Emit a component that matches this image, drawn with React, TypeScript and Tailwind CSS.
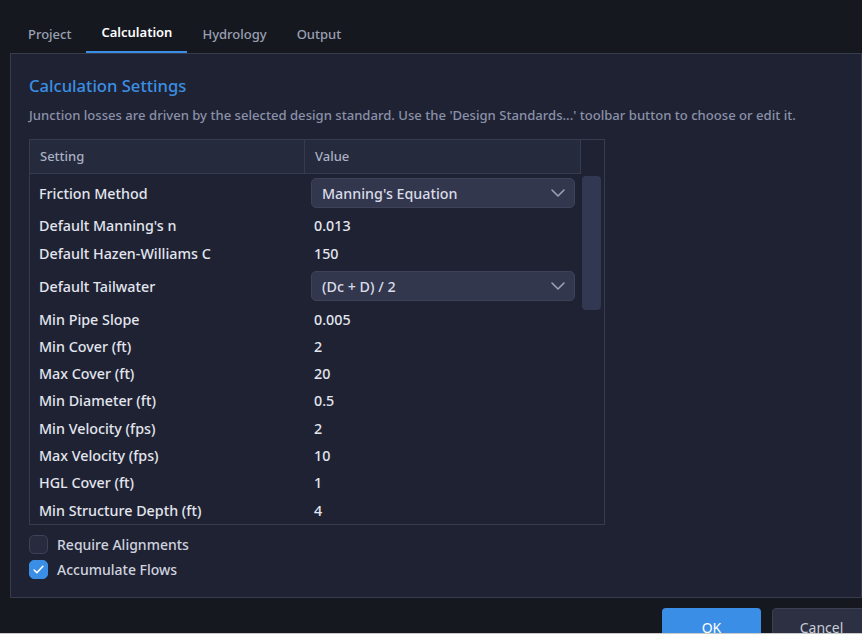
import React, { useState } from "react";

type Row = { label: string; value: string; select?: boolean };

const rows: Row[] = [
  { label: "Friction Method", value: "Manning's Equation", select: true },
  { label: "Default Manning's n", value: "0.013" },
  { label: "Default Hazen-Williams C", value: "150" },
  { label: "Default Tailwater", value: "(Dc + D) / 2", select: true },
  { label: "Min Pipe Slope", value: "0.005" },
  { label: "Min Cover (ft)", value: "2" },
  { label: "Max Cover (ft)", value: "20" },
  { label: "Min Diameter (ft)", value: "0.5" },
  { label: "Min Velocity (fps)", value: "2" },
  { label: "Max Velocity (fps)", value: "10" },
  { label: "HGL Cover (ft)", value: "1" },
  { label: "Min Structure Depth (ft)", value: "4" },
];

const tabs = ["Project", "Calculation", "Hydrology", "Output"];

function Chevron() {
  return (
    <svg width="24" height="24" viewBox="0 0 24 24" fill="none" stroke="#9aa1b8" strokeWidth="1.6" strokeLinecap="round" strokeLinejoin="round">
      <path d="m6 9 6 6 6-6" />
    </svg>
  );
}

function Checkbox({ checked, label, onToggle }: { checked: boolean; label: string; onToggle: () => void }) {
  return (
    <label className="flex items-center gap-[9px] cursor-pointer h-[19px]" onClick={onToggle}>
      <span
        className={
          checked
            ? "w-[19px] h-[19px] rounded-[5px] bg-[#3b8ee6] border border-[#3b8ee6] flex items-center justify-center"
            : "w-[19px] h-[19px] rounded-[5px] bg-[#272b3d] border border-[#3d4259]"
        }
      >
        {checked && (
          <svg width="13" height="13" viewBox="0 0 24 24" fill="none" stroke="white" strokeWidth="3" strokeLinecap="round" strokeLinejoin="round">
            <path d="M4 13l5 5L20 6" />
          </svg>
        )}
      </span>
      <span className="text-[14px] leading-[19px] font-medium text-[#cfd3df]">{label}</span>
    </label>
  );
}

export default function App() {
  const [active, setActive] = useState("Calculation");
  const [requireAlign, setRequireAlign] = useState(false);
  const [accumulate, setAccumulate] = useState(true);

  return (
    <div className="h-[634px] bg-[#c9c9c9] overflow-hidden" style={{ fontFamily: '"Noto Sans", sans-serif' }}>
      <div className="h-[633px] bg-[#161820] flex flex-col overflow-hidden">
        {/* Tabs */}
        <div className="flex h-[53px] items-end pl-[13px]">
          {tabs.map(t => (
            <button
              key={t}
              onClick={() => setActive(t)}
              className={
                t === active
                  ? "h-[53px] px-[15px] pb-[9px] flex items-end text-[13px] font-semibold text-white border-b-2 border-[#3b8ee6]"
                  : "h-[53px] px-[15px] pb-[7px] flex items-end text-[13px] font-medium text-[#9aa0b3] border-b-2 border-transparent"
              }
            >
              {t}
            </button>
          ))}
        </div>

        {/* Panel */}
        <div className="ml-[10px] h-[545px] shrink-0 border border-[#373b4f] bg-[#1f2233] px-[18px] pt-[21px]">
          <h2 className="text-[16.6px] text-[#3b8fe3] font-medium leading-[22px]">Calculation Settings</h2>
          <p className="mt-[9px] text-[13.1px] font-medium text-[#8a91a8] leading-[19px]">
            Junction losses are driven by the selected design standard. Use the 'Design Standards...' toolbar button to choose or edit it.
          </p>

          {/* Table */}
          <div className="mt-[14px] w-[576px] h-[386px] border border-[#373b4f] flex overflow-hidden">
            <div className="w-[551px] flex flex-col">
              <div className="flex h-[34px] shrink-0 bg-[#252a3c] border-b border-[#373b4f] text-[13px] font-medium text-[#aab0c3]">
                <div className="w-[275px] border-r border-[#373b4f] flex items-center pl-[10px]">Setting</div>
                <div className="flex-1 border-r border-[#373b4f] flex items-center pl-[10px]">Value</div>
              </div>
              {rows.map(r => (
                <div key={r.label} className={r.select ? "flex h-[38.5px] shrink-0 items-center" : "flex h-[27.3px] shrink-0 items-center"}>
                  <div className="w-[275px] pl-[9px] text-[14.3px] font-medium text-[#e3e6ee]">{r.label}</div>
                  {r.select ? (
                    <div className="ml-[6px] w-[264px] h-[30px] rounded-[5px] bg-[#33374d] border border-[#3d4259] flex items-center justify-between pl-[10px] pr-[4px] text-[14.3px] font-medium text-[#d9dce8]">
                      <span>{r.value}</span>
                      <Chevron />
                    </div>
                  ) : (
                    <div className="pl-[9px] text-[14.3px] font-medium text-[#e3e6ee]">{r.value}</div>
                  )}
                </div>
              ))}
            </div>
            <div className="flex-1 pt-[36px] pl-[1px] pr-[2px]">
              <div className="h-[134px] w-[19px] rounded-[4px] bg-[#323852]" />
            </div>
          </div>

          {/* Options */}
          <div className="mt-[10px] flex flex-col gap-[6px]">
            <Checkbox checked={requireAlign} label="Require Alignments" onToggle={() => setRequireAlign(v => !v)} />
            <Checkbox checked={accumulate} label="Accumulate Flows" onToggle={() => setAccumulate(v => !v)} />
          </div>
        </div>

        {/* Footer */}
        <div className="flex gap-[11px] pl-[662px] pt-[10px]">
          <button className="shrink-0 w-[99px] h-[34px] rounded-[4px] bg-[#3b8ee6] text-white text-[14px] pt-[4px]">OK</button>
          <button className="shrink-0 w-[99px] h-[34px] rounded-[4px] bg-[#2c3042] border border-[#3b3f52] text-[#c8ccd8] text-[14px] pt-[4px]">Cancel</button>
        </div>
      </div>
    </div>
  );
}
